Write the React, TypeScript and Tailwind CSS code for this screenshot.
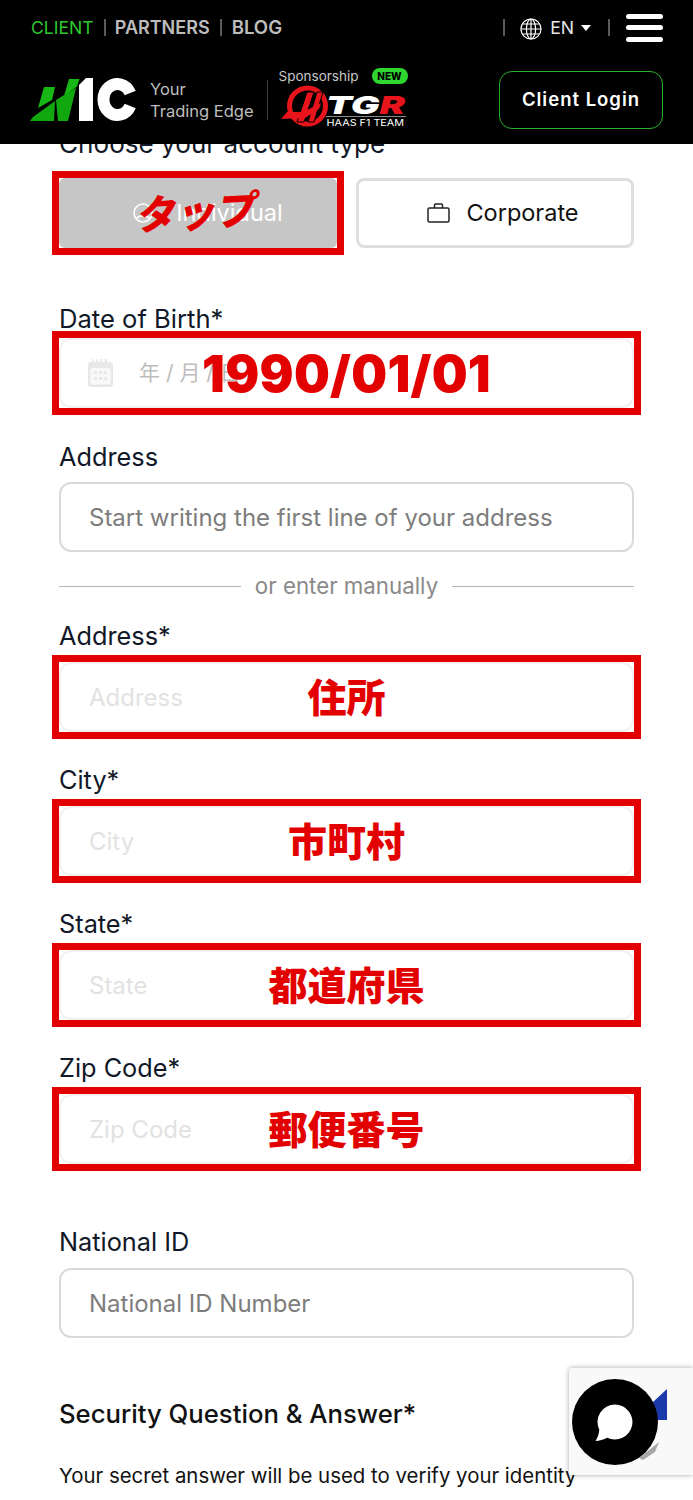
import type { ReactNode } from 'react';

const font = "[font-family:Inter,'Noto_Sans_CJK_JP',sans-serif]";

function Logo() {
    return (
        <svg width="120" height="60" viewBox="0 0 120 60" className="shrink-0">
            <polygon points="19,17 30,17 27,30 13,38" fill="#17b815" />
            <polygon points="5,51 8,47 30,31 29,51" fill="#10a80e" />
            <polygon points="44,9 54.5,9 52,16.5 39,26" fill="#17b815" />
            <polygon points="31,30 44,22 51,18 43,51 33,51" fill="#10a80e" />
            <polygon points="54,15 61,8 68,8 68,51 54,51" fill="#fff" />
            <path d="M105.2 23 A14 15.5 0 1 0 105.2 36" fill="none" stroke="#fff" strokeWidth="12" />
        </svg>
    );
}

function HaasMark() {
    return (
        <svg width="56" height="50" viewBox="0 0 56 50" className="-mt-[5px] shrink-0">
            <circle cx="28.5" cy="24" r="18" fill="none" stroke="#e8141c" strokeWidth="5" />
            <polygon points="28,10 35,10 25,40 18,40" fill="#e8141c" stroke="#000" strokeWidth="1" />
            <polygon points="38,10 44,10 35,40 29,40" fill="#e8141c" stroke="#000" strokeWidth="1" />
            <polygon points="2,37 8,30 24,30 42,21 40,27 26,36" fill="#e8141c" />
        </svg>
    );
}

function GlobeIcon() {
    return (
        <svg width="22" height="22" viewBox="0 0 22 22" fill="none" stroke="#fff" strokeWidth="1.2" className="ml-[15px] mt-[3px] shrink-0">
            <circle cx="11" cy="11" r="10" />
            <ellipse cx="11" cy="11" rx="4.6" ry="10" />
            <path d="M11 1v20M1 11h20M2.6 6h16.8M2.6 16h16.8" />
        </svg>
    );
}

function CalendarIcon() {
    return (
        <svg width="27" height="28" viewBox="0 0 27 28" className="shrink-0" fill="#e8e8e8">
            <path d="M5 0h1.6v3h2.6V0h1.6v3h2.6V0h1.6v3h2.6V0H20v3h3a3 3 0 0 1 3 3v19a3 3 0 0 1-3 3H4a3 3 0 0 1-3-3V6a3 3 0 0 1 3-3h1z" />
            <rect x="3.5" y="9" width="20" height="16.5" rx="1.5" fill="#f8f8f8" />
            <rect x="7" y="12" width="3" height="3" />
            <rect x="12" y="12" width="3" height="3" />
            <rect x="17" y="12" width="3" height="3" />
            <rect x="7" y="18" width="3" height="3" />
            <rect x="12" y="18" width="3" height="3" />
            <rect x="17" y="18" width="3" height="3" />
        </svg>
    );
}

function CaseIcon() {
    return (
        <svg width="23" height="20" viewBox="0 0 23 20" fill="none" stroke="#222" strokeWidth="1.5" className="shrink-0">
            <rect x="1" y="5" width="21" height="14" rx="1.5" />
            <path d="M7.5 5V2.2A1.2 1.2 0 0 1 8.7 1h5.6a1.2 1.2 0 0 1 1.2 1.2V5" />
        </svg>
    );
}

function Sep({ className = '' }: { className?: string }) {
    return <span className={`h-[17px] w-[2px] shrink-0 bg-[#5b5b5b] ${className}`} />;
}

function Header() {
    return (
        <header className="relative z-10 h-[144px] bg-black">
            <div className="flex h-[55px] items-center pl-[31px] pr-[30px] text-[17.6px] leading-none">
                <span className="text-[#2fc92f]">CLIENT</span>
                <Sep className="ml-[10px]" />
                <span className="ml-[9px] text-[18px] font-semibold text-[#bdbdbd]">PARTNERS</span>
                <Sep className="ml-[10px]" />
                <span className="ml-[10px] text-[18.6px] font-semibold text-[#bdbdbd]">BLOG</span>
                <Sep className="ml-auto" />
                <GlobeIcon />
                <span className="ml-[8px] text-[#e6e6e6]">EN</span>
                <span className="ml-[7px] h-0 w-0 border-x-[5px] border-t-[6px] border-x-transparent border-t-white" />
                <Sep className="ml-[17px]" />
                <div className="ml-[16px] flex w-[37px] flex-col gap-[6.5px]">
                    <span className="h-[5px] rounded-full bg-white" />
                    <span className="h-[5px] rounded-full bg-white" />
                    <span className="h-[5px] rounded-full bg-white" />
                </div>
            </div>
            <div className="flex items-start pl-[25px]">
                <div className="mt-[15px] w-[120px] shrink-0">
                    <Logo />
                </div>
                <div className="ml-[5px] mt-[23px] text-[16.5px] leading-[22px] text-[#bdbdbd]">
                    <div>Your</div>
                    <div>Trading Edge</div>
                </div>
                <span className="ml-[13px] mt-[25px] h-[40px] w-px bg-[#3a3a3a]" />
                <div className="ml-[-1px] mt-[10px]">
                    <div className="ml-[12px] flex items-center">
                        <span className="text-[13.5px] leading-[22px] text-[#c8c8c8]">Sponsorship</span>
                        <span className="ml-[13px] flex h-[16px] w-[36px] items-center justify-center rounded-full bg-[#2fd62f] text-[10px] font-extrabold text-black">
                            NEW
                        </span>
                    </div>
                    <div className="ml-[12px] flex items-start">
                        <HaasMark />
                        <div className="-ml-[9px] mt-[7px] w-[80px]">
                            <div className="origin-left scale-x-[1.52] text-[25px] font-black italic leading-[22px] text-white">
                                TG<span className="text-[#e8141c]">R</span>
                            </div>
                            <div className="border-t border-[#8a8a8a] text-center text-[9px] leading-[11px] whitespace-nowrap text-white">
                                <span className="inline-block scale-x-[1.2]">HAAS F1 TEAM</span>
                            </div>
                        </div>
                    </div>
                </div>
                <button className="ml-auto mr-[30px] mt-[16px] h-[58px] w-[164px] shrink-0 rounded-[13px] border border-[#25b02a] text-[18.5px] font-semibold tracking-[1px] text-white">
                    Client Login
                </button>
            </div>
        </header>
    );
}

function Mark({ children, className = '' }: { children: ReactNode; className?: string }) {
    return (
        <div
            className={`absolute -inset-[7px] flex items-center justify-center border-[7px] border-[#e30000] font-black text-[#e30000] ${className}`}
        >
            {children}
        </div>
    );
}

function Field({
    label,
    placeholder,
    note,
    className = '',
    labelGap = 'mt-[10px]',
}: {
    label: string;
    placeholder: string;
    note?: string;
    className?: string;
    labelGap?: string;
}) {
    return (
        <div className={className}>
            <label className="block text-[25.3px] leading-[32px] text-[#111827]">{label}</label>
            <div className={`relative h-[70px] ${labelGap}`}>
                <input
                    placeholder={placeholder}
                    className={`h-full w-full rounded-[12px] border-2 bg-white px-[28px] text-[24px] outline-none ${
                        note
                            ? 'border-[#f1f1f1] placeholder:text-[#e2e2e2]'
                            : 'border-[#dadada] placeholder:text-[#7d7d7d]'
                    }`}
                />
                {note && <Mark className="text-[39px] leading-none">{note}</Mark>}
            </div>
        </div>
    );
}

function AccountType() {
    return (
        <>
            <div className="-mt-[16px] text-[26.1px] leading-[32px] whitespace-nowrap text-[#111827]">Choose your account type</div>
            <div className="mt-[18px] grid grid-cols-2 gap-[19px]">
                <div className="relative flex h-[70px] items-center justify-center gap-[23px] rounded-[6px] bg-[#c6c6c6] pl-[20px] text-[23.5px] text-white">
                    <svg width="20" height="20" viewBox="0 0 20 20" fill="none" stroke="#fff" strokeWidth="1.6">
                        <circle cx="10" cy="10" r="9" />
                        <path d="M3 16c2-4 12-4 14 0" />
                    </svg>
                    <span>Individual</span>
                    <Mark className="text-[40px] leading-none">
                        <span className="-skew-x-12 -rotate-3">タップ</span>
                    </Mark>
                </div>
                <button className="flex h-[70px] items-center justify-center gap-[16px] rounded-[8px] border-[3px] border-[#dedede] bg-white pl-[16px] text-[23.5px] text-[#111]">
                    <CaseIcon />
                    Corporate
                </button>
            </div>
        </>
    );
}

function DateField() {
    return (
        <div className="mt-[55px]">
            <label className="block text-[25.6px] leading-[32px] text-[#111827]">Date of Birth*</label>
            <div className="relative mt-[3px] h-[70px]">
                <div className="flex h-full items-center rounded-[12px] border-2 border-[#f1f1f1] bg-white pl-[26px]">
                    <CalendarIcon />
                    <span className="ml-[25px] text-[21px] text-[#bdbdbd]">年 / 月 / 日</span>
                </div>
                <Mark className="pt-[3px] text-[50.5px] leading-none tracking-[0.3px]">1990/01/01</Mark>
            </div>
        </div>
    );
}

function Floating() {
    return (
        <>
            <div className="absolute left-[569px] top-[1368px] h-[107px] w-[124px] rounded-l-[3px] bg-[#f9f9f9] shadow-[0_0_5px_rgba(0,0,0,0.35)]">
                <svg width="124" height="107" viewBox="0 0 124 107">
                    <polygon points="60,22 84,34 98,21 98,52 70,52" fill="#1c3aa9" />
                    <polygon points="70,90 90,74 86,84 74,92" fill="#a8a8a8" />
                </svg>
            </div>
            <div className="absolute left-[572px] top-[1379px] flex h-[86px] w-[86px] items-center justify-center rounded-full bg-black">
                <svg width="42" height="42" viewBox="0 0 42 42">
                    <path
                        d="M21 3.5a17.5 17.5 0 1 1-7.8 33.2C10 38.5 5 39.8 1.5 40c2-3 3.4-7 3.8-11.3A17.5 17.5 0 0 1 21 3.5z"
                        fill="#fff"
                    />
                </svg>
            </div>
        </>
    );
}

export default function App() {
    return (
        <div className={`relative h-[1500px] w-[693px] overflow-hidden bg-white ${font}`}>
            <Header />
            <main className="px-[59px]">
                <AccountType />
                <DateField />
                <Field className="mt-[33px]" label="Address" placeholder="Start writing the first line of your address" labelGap="mt-[9px]" />
                <div className="mt-[20px] flex items-center gap-[14px] text-[22.3px] leading-[28px] text-[#8a8a8a]">
                    <span className="h-px flex-1 bg-[#b5b5b5]" />
                    or enter manually
                    <span className="h-px flex-1 bg-[#b5b5b5]" />
                </div>
                <Field className="mt-[20px]" label="Address*" placeholder="Address" note="住所" />
                <Field className="mt-[32px]" label="City*" placeholder="City" note="市町村" />
                <Field className="mt-[32px]" label="State*" placeholder="State" note="都道府県" />
                <Field className="mt-[32px]" label="Zip Code*" placeholder="Zip Code" note="郵便番号" />
                <Field className="mt-[62px]" label="National ID" placeholder="National ID Number" />
                <h3 className="mt-[60px] text-[25.7px] font-medium leading-[32px] text-[#111]">Security Question &amp; Answer*</h3>
                <p className="mt-[32px] whitespace-nowrap text-[20.4px] leading-[28px] text-[#111]">
                    Your secret answer will be used to verify your identity
                </p>
            </main>
            <Floating />
        </div>
    );
}
